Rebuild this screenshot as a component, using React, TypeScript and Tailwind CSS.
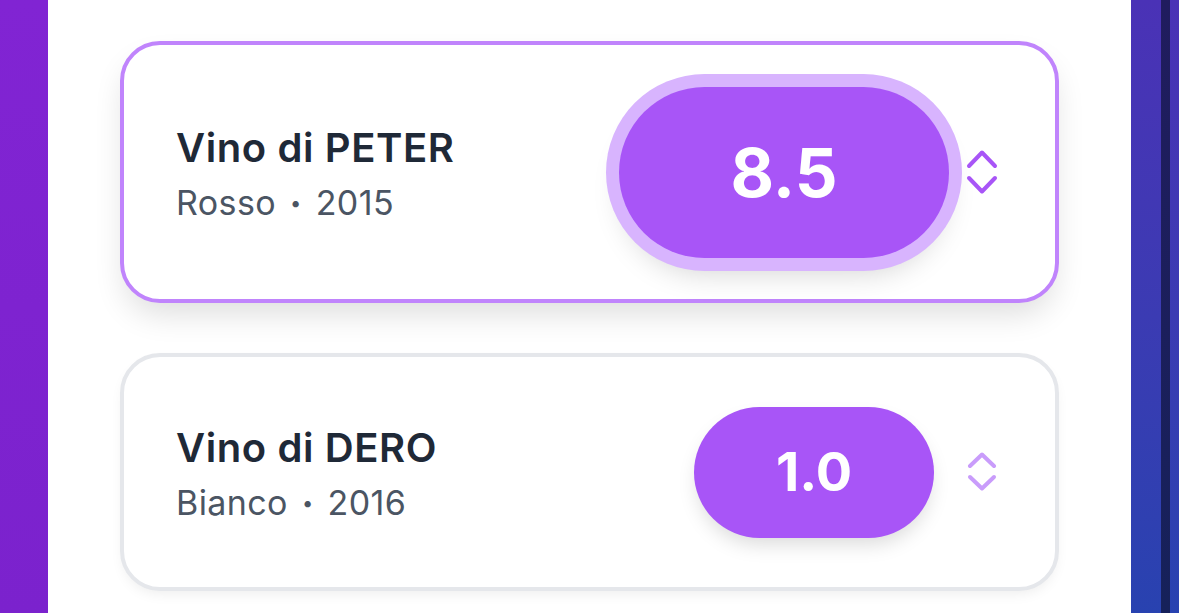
import React from "react";

function Chevrons({ big }: { big: boolean }) {
  if (big) {
    return (
      <svg width="32" height="46" viewBox="0 0 32 46" fill="none" className="shrink-0 text-[#a855f7]">
        <path d="M3 17 L16 3.5 L29 17" stroke="currentColor" strokeWidth="4" strokeLinecap="round" strokeLinejoin="round" />
        <path d="M3 29 L16 42.5 L29 29" stroke="currentColor" strokeWidth="4" strokeLinecap="round" strokeLinejoin="round" />
      </svg>
    );
  }
  return (
    <svg width="32" height="40" viewBox="0 0 32 40" fill="none" className="shrink-0 text-[#c99cfb]">
      <path d="M4 14 L16 2.5 L28 14" stroke="currentColor" strokeWidth="4" strokeLinecap="round" strokeLinejoin="round" />
      <path d="M4 25 L16 36.5 L28 25" stroke="currentColor" strokeWidth="4" strokeLinecap="round" strokeLinejoin="round" />
    </svg>
  );
}

function Info({ name, sub, year }: { name: string; sub: string; year: string }) {
  return (
    <div className="flex flex-col mt-[4px]">
      <div className="text-[40px] leading-[48px] font-semibold text-[#1f2937] tracking-[0.6px]">{name}</div>
      <div className="text-[34px] leading-[44px] text-[#4b5563] flex items-center mt-[9px] tracking-[0.4px]">
        <span>{sub}</span>
        <span className="text-[20px] mx-[14px]">•</span>
        <span>{year}</span>
      </div>
    </div>
  );
}

export default function App() {
  return (
    <div
      className="w-[1179px] h-[613px] overflow-hidden flex"
      style={{ fontFamily: "Inter, 'Noto Sans', sans-serif" }}
    >
      <div className="w-[48px] h-full bg-gradient-to-b from-[#8124d3] to-[#7b22cd] shrink-0" />
      <div className="w-[1083px] h-[626px] bg-white rounded-b-[34px] shrink-0 flex flex-col gap-[50px] pt-[41px] px-[72px]">
        <div className="h-[262px] rounded-[40px] border-4 border-[#c084fc] bg-white shadow-[0_16px_32px_-6px_rgba(0,0,0,0.14)] flex items-center justify-between pl-[52px] pr-[57px]">
          <Info name="Vino di PETER" sub="Rosso" year="2015" />
          <div className="flex items-center gap-[17px]">
            <div className="w-[330px] h-[171px] rounded-full bg-[#a855f7] ring-[13px] ring-[#d8b4fe] shadow-[0_18px_30px_-4px_rgba(0,0,0,0.18)] flex items-center justify-center">
              <span className="text-white text-[67px] font-bold leading-none">8.5</span>
            </div>
            <Chevrons big />
          </div>
        </div>
        <div className="h-[238px] rounded-[40px] border-4 border-[#e5e7eb] bg-white shadow-[0_6px_14px_-4px_rgba(0,0,0,0.08)] flex items-center justify-between pl-[52px] pr-[57px]">
          <Info name="Vino di DERO" sub="Bianco" year="2016" />
          <div className="flex items-center gap-[32px]">
            <div className="w-[240px] h-[131px] rounded-full bg-[#a855f7] shadow-[0_10px_20px_-4px_rgba(0,0,0,0.15)] flex items-center justify-center">
              <span className="text-white text-[54px] font-bold leading-none">1.0</span>
            </div>
            <Chevrons big={false} />
          </div>
        </div>
      </div>
      <div className="w-[48px] h-full bg-gradient-to-b from-[#4a32b6] to-[#2842b0] shrink-0 flex">
        <div className="w-[30px]" />
        <div className="w-[9px] h-full bg-gradient-to-b from-[#201c5e] to-[#16215a]" />
      </div>
    </div>
  );
}
